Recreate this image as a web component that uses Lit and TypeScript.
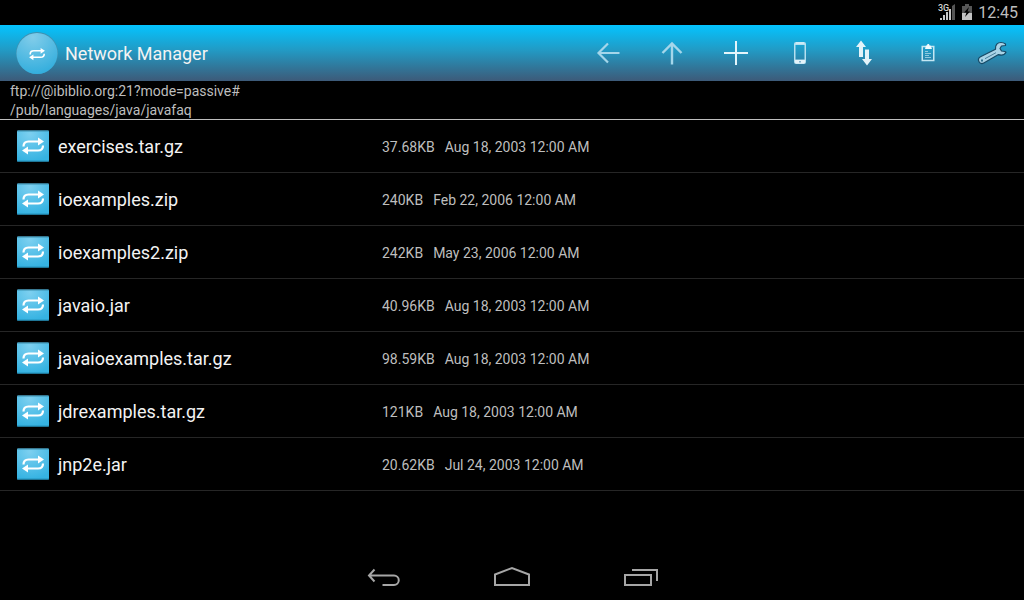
import { LitElement, html, css, svg } from "lit";
import { customElement, property } from "lit/decorators.js";

interface RemoteFile {
  name: string;
  size: string;
  date: string;
}

const FILES: RemoteFile[] = [
  { name: "exercises.tar.gz", size: "37.68KB", date: "Aug 18, 2003 12:00 AM" },
  { name: "ioexamples.zip", size: "240KB", date: "Feb 22, 2006 12:00 AM" },
  { name: "ioexamples2.zip", size: "242KB", date: "May 23, 2006 12:00 AM" },
  { name: "javaio.jar", size: "40.96KB", date: "Aug 18, 2003 12:00 AM" },
  { name: "javaioexamples.tar.gz", size: "98.59KB", date: "Aug 18, 2003 12:00 AM" },
  { name: "jdrexamples.tar.gz", size: "121KB", date: "Aug 18, 2003 12:00 AM" },
  { name: "jnp2e.jar", size: "20.62KB", date: "Jul 24, 2003 12:00 AM" },
];

const ACTIONS = [
  {
    label: "Back",
    icon: svg`<path d="M27.500 16H6.500M16 6.500L6.500 16L16 25.500" fill="none" stroke="#a4d6ea" stroke-width="2.200"/>`,
  },
  {
    label: "Up",
    icon: svg`<path d="M16 27.500V6.500M6.500 16L16 6.500L25.500 16" fill="none" stroke="#a4d6ea" stroke-width="2.400"/>`,
  },
  {
    label: "Add",
    icon: svg`<path d="M16 4v24M4 16h24" fill="none" stroke="#e4f5fb" stroke-width="2"/>`,
  },
  {
    label: "Device",
    icon: svg`<path fill="#b5e0f0" fill-rule="evenodd" d="M12 5h8a2 2 0 0 1 2 2v18a2 2 0 0 1-2 2h-8a2 2 0 0 1-2-2V7a2 2 0 0 1 2-2zM11.500 8v14.500h9V8z"/><path fill="#e4f3f9" d="M11 23h10v2.500l-1 1h-8l-1-1zM12 5.500h8v1h-8z"/><path fill="#7fb4cd" d="M15 24h2v1.500h-2z"/>`,
  },
  {
    label: "Transfer",
    icon: svg`<path fill="#e4f3f9" d="M13 3.500L18 10h-3v10h-4V10H8zM17 12.500h4v9.500h3L19 28.500L14 22h3z"/>`,
  },
  {
    label: "Paste",
    icon: svg`<path fill="none" stroke="#c4e7f3" stroke-width="1.500" d="M10.250 9.500h11.500v14h-11.500z"/><path fill="#f0fafd" d="M14 8.500h1l.5-1.500h1.500l.5 1.500h1l1.500 3.500h-7z"/><path stroke="#8fc9df" d="M13 14.500h3M13 16.500h6M13 18.500h4M13 20.500h6"/>`,
  },
  {
    label: "Settings",
    icon: svg`<path fill="#a9d3e6" stroke="#174a66" stroke-width="1.200" stroke-linejoin="round" d="M29.500 7C27 5.200 23 4.800 20.800 7.200C19.500 8.700 19.300 10.500 19.500 12.200L4.500 19.800C2.500 21 2 23 3 24.800C4 26.600 6 27 7.800 26L22.500 17.600C25.500 18.600 28.500 17.800 30 15.200L29 14.500L25.500 14L24 11.500L25.500 9L29.500 8.500z"/><path fill="none" stroke="#4b7f9a" stroke-width="1" d="M9 21.700l11-6"/><path fill="#2d718f" d="M5 22.500h2v2H5z"/>`,
  },
];

const NAV = [
  {
    label: "Back",
    icon: svg`<path d="M5 9.500h25a4.750 4.750 0 0 1 0 9.500H18.500M10.500 3.500L5 9.500L10.500 15.500"/>`,
  },
  {
    label: "Home",
    icon: svg`<path d="M3 19V8.500L20 2L37 8.500V19z"/>`,
  },
  {
    label: "Recent apps",
    icon: svg`<path d="M5 9h26v10H5zM12 4h25v11"/>`,
  },
];

const loopArrows = svg`
  <path fill="none" stroke="#fff" stroke-width="2.200" d="M6.500 16.500C6.500 13 8 11.500 11.500 11.500H22M26 15.500C26 19 24.500 20.500 21 20.500H10"/>
  <path fill="#fff" d="M21 7.500L27 11.500L21 15.500zM11 16.500L5 20.500L11 24.500z"/>`;

@customElement("file-row")
class FileRow extends LitElement {
  @property({ attribute: false }) file!: RemoteFile;

  static styles = css`
    :host {
      display: block;
      border-bottom: 1px solid #262626;
    }
    .entry {
      display: grid;
      grid-template-columns: 32px 315px 1fr;
      align-items: center;
      column-gap: 9px;
      width: 100%;
      height: 52px;
      padding: 0 17px;
      border: 0;
      background: none;
      color: #f3f3f3;
      font: 18px/24px Roboto, sans-serif;
      text-align: left;
    }
    .icon {
      display: block;
      width: 32px;
      height: 32px;
    }
    .name,
    .details {
      padding-top: 2px;
    }
    .details {
      display: flex;
      gap: 10px;
      color: #bebebe;
      font-size: 14px;
    }
  `;

  render() {
    return html`
      <button class="entry">
        <svg class="icon" viewBox="0 0 32 32" aria-hidden="true">
          <defs>
            <radialGradient id="tile" cx=".4" cy=".1" r=".9">
              <stop offset="0" stop-color="#7dd0f0" />
              <stop offset="1" stop-color="#36b3e2" />
            </radialGradient>
          </defs>
          <rect y=".5" width="32" height="31" rx="1" fill="url(#tile)" />
          <path d="M.5 1h31" stroke="#3d8fae" />
          <path d="M0 31h32" stroke="#2592bd" />
          ${loopArrows}
        </svg>
        <span class="name">${this.file.name}</span>
        <span class="details"><span>${this.file.size}</span><span>${this.file.date}</span></span>
      </button>
    `;
  }
}

@customElement("app-root")
class AppRoot extends LitElement {
  static styles = css`
    :host {
      display: flex;
      flex-direction: column;
      min-height: 100vh;
      background: #000;
      color: #f3f3f3;
      font-family: Roboto, sans-serif;
    }
    button {
      padding: 0;
      border: 0;
      background: none;
    }
    svg {
      display: block;
    }
    .status {
      display: flex;
      justify-content: flex-end;
      align-items: center;
      height: 25px;
      padding-right: 6px;
      color: #bebebe;
      font-size: 16px;
      line-height: 25px;
    }
    .clock {
      min-width: 44px;
      text-align: right;
    }
    .network {
      font-size: 9px;
      font-weight: 500;
    }
    .bar {
      display: flex;
      align-items: center;
      height: 56px;
      padding-left: 16px;
      background: linear-gradient(#04c4ff, #229ac4 45%, #3d5a78);
    }
    .title {
      flex: 1;
      margin: 0;
      padding: 2px 0 0 7px;
      font-size: 18px;
      line-height: 24px;
      font-weight: 400;
    }
    .actions {
      display: flex;
    }
    .action {
      display: grid;
      place-items: center;
      width: 64px;
      height: 56px;
    }
    .path {
      padding: 1px 10px 0;
      height: 37px;
      border-bottom: 1px solid #bebebe;
      color: #bebebe;
      font-size: 14px;
      line-height: 19px;
    }
    .files {
      flex: 1;
      margin: 0;
      padding: 0;
      list-style: none;
    }
    .nav {
      display: flex;
      justify-content: center;
      height: 48px;
    }
    .key {
      display: grid;
      place-items: center;
      width: 128px;
      padding-top: 2px;
      fill: none;
      stroke: #a6a6a6;
      stroke-width: 2;
    }
  `;

  render() {
    return html`
      <div class="status">
        <svg width="36" height="25" viewBox="0 0 36 25" aria-label="3G signal, battery charging">
          <path fill="#555" d="M14 6L17 4v16h-3z" />
          <path fill="#c9c9c9" d="M2 18h2v2H2zM5 15h2v5H5zM8 12h2v8H8zM11 9h2v11h-2z" />
          <text class="network" x="0" y="11" fill="#d0d0d0">3G</text>
          <path fill="#565656" d="M27 4h4v2h3v7H24V6h3z" />
          <path fill="#c4c4c4" d="M24 13h10v7H24z" />
          <path fill="#000" d="M31 7l-5 5.500h2.500L27 17l5-5.500h-2.500z" />
        </svg>
        <span class="clock">12:45</span>
      </div>
      <header class="bar">
        <svg width="42" height="44" viewBox="0 0 42 44" aria-hidden="true">
          <defs>
            <radialGradient id="disc" cx=".4" cy=".1" r=".9">
              <stop offset="0" stop-color="#82cdea" />
              <stop offset="1" stop-color="#34aedd" />
            </radialGradient>
          </defs>
          <circle cx="21" cy="22" r="21" fill="#3f91b1" />
          <circle cx="21" cy="22.500" r="20.500" fill="url(#disc)" />
          <g transform="translate(9.500 11.500) scale(.72)">${loopArrows}</g>
        </svg>
        <h1 class="title">Network Manager</h1>
        <nav class="actions">
          ${ACTIONS.map(
            (a) => html`<button class="action" aria-label=${a.label}>
              <svg width="32" height="32" viewBox="0 0 32 32">${a.icon}</svg>
            </button>`
          )}
        </nav>
      </header>
      <div class="path">
        <div>ftp://@ibiblio.org:21?mode=passive#</div>
        <div>/pub/languages/java/javafaq</div>
      </div>
      <ul class="files">
        ${FILES.map((f) => html`<li><file-row .file=${f}></file-row></li>`)}
      </ul>
      <footer class="nav">
        ${NAV.map(
          (n) => html`<button class="key" aria-label=${n.label}>
            <svg width="40" height="22" viewBox="0 0 40 22">${n.icon}</svg>
          </button>`
        )}
      </footer>
    `;
  }
}
